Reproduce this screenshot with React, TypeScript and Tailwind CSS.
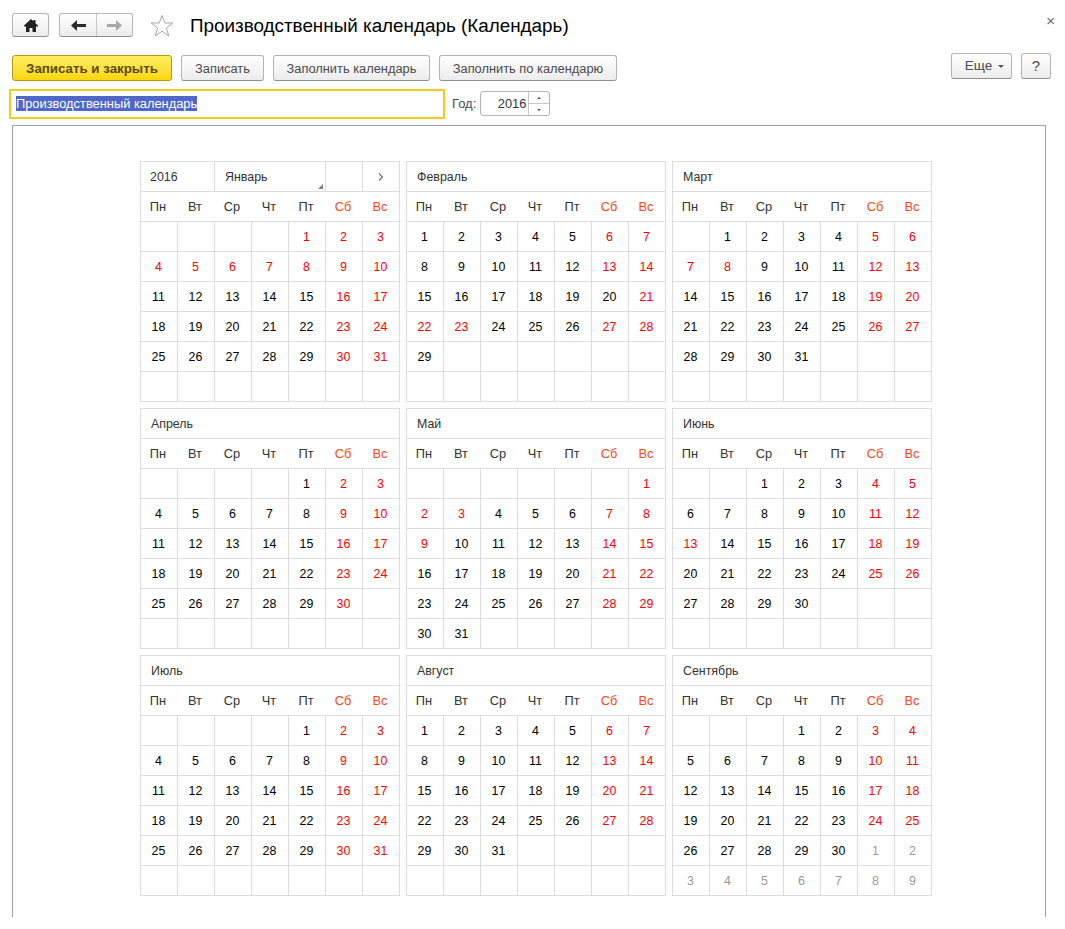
const dayNames = ["Пн", "Вт", "Ср", "Чт", "Пт", "Сб", "Вс"];

type Month = { name: string; offset: number; days: number; red: number[]; trailing?: number };

const months: Month[] = [
  { name: "Январь", offset: 4, days: 31, red: [1, 2, 3, 4, 5, 6, 7, 8, 9, 10, 16, 17, 23, 24, 30, 31] },
  { name: "Февраль", offset: 0, days: 29, red: [6, 7, 13, 14, 21, 22, 23, 27, 28] },
  { name: "Март", offset: 1, days: 31, red: [5, 6, 7, 8, 12, 13, 19, 20, 26, 27] },
  { name: "Апрель", offset: 4, days: 30, red: [2, 3, 9, 10, 16, 17, 23, 24, 30] },
  { name: "Май", offset: 6, days: 31, red: [1, 2, 3, 7, 8, 9, 14, 15, 21, 22, 28, 29] },
  { name: "Июнь", offset: 2, days: 30, red: [4, 5, 11, 12, 13, 18, 19, 25, 26] },
  { name: "Июль", offset: 4, days: 31, red: [2, 3, 9, 10, 16, 17, 23, 24, 30, 31] },
  { name: "Август", offset: 0, days: 31, red: [6, 7, 13, 14, 20, 21, 27, 28] },
  { name: "Сентябрь", offset: 3, days: 30, red: [3, 4, 10, 11, 17, 18, 24, 25], trailing: 9 },
];

function Button({ className, children }: { className: string; children: React.ReactNode }) {
  return (
    <button className={`flex items-center justify-center rounded-[3px] border border-[#b5b5b5] border-b-[#8f8f8f] bg-gradient-to-b from-white to-[#ececec] text-[#4b4b4b] ${className}`}>
      {children}
    </button>
  );
}

function Calendar({ month, first }: { month: Month; first: boolean }) {
  const cells: { label: number | null; color: string }[] = [];
  for (let i = 0; i < month.offset; i++) cells.push({ label: null, color: "" });
  for (let d = 1; d <= month.days; d++) {
    cells.push({ label: d, color: month.red.includes(d) ? "text-[#ff0000]" : "text-black" });
  }
  for (let d = 1; d <= (month.trailing ?? 0); d++) cells.push({ label: d, color: "text-[#9a9a9a]" });
  while (cells.length < 42) cells.push({ label: null, color: "" });

  return (
    <div className="w-[260px] border-t border-l border-[#dddddd] text-[12.4px]">
      {first ? (
        <div className="grid h-[30px] grid-cols-[74px_111px_37px_37px] text-[#333333]">
          <div className="flex items-center border-r border-b border-[#dddddd] pt-[1px] pl-[9px]">2016</div>
          <div className="relative flex items-center border-r border-b border-[#dddddd] pt-[1px] pl-[10px]">
            {month.name}
            <span className="absolute right-[2px] bottom-[2px] h-0 w-0 border-b-[5px] border-l-[5px] border-b-[#808080] border-l-transparent" />
          </div>
          <div className="border-r border-b border-[#dddddd]" />
          <div className="flex items-center justify-center border-r border-b border-[#dddddd]">
            <svg width="6" height="8" viewBox="0 0 6 8" fill="none" stroke="#777777" strokeWidth="1.2">
              <path d="M1 0.5L4.5 4L1 7.5" />
            </svg>
          </div>
        </div>
      ) : (
        <div className="flex h-[30px] items-center border-r border-b border-[#dddddd] pt-[1px] pl-[10px] text-[#333333]">{month.name}</div>
      )}
      <div className="grid h-[30px] grid-cols-[repeat(7,37px)] border-b border-[#dddddd] text-[12.8px]">
        {dayNames.map((d, i) => (
          <div key={d} className={`flex items-center justify-center border-r pr-[2px] ${i === 6 ? "border-[#dddddd]" : "border-transparent"} ${i > 4 ? "text-[#ff4a12]" : "text-[#333333]"}`}>
            {d}
          </div>
        ))}
      </div>
      <div className="grid grid-cols-[repeat(7,37px)]">
        {cells.map((c, i) => (
          <div key={i} className={`flex h-[30px] items-center justify-center border-r border-b border-[#dddddd] pt-[1px] pr-[1px] ${c.color}`}>
            {c.label}
          </div>
        ))}
      </div>
    </div>
  );
}

export default function App() {
  return (
    <div className="h-[929px] w-[1065px] overflow-hidden bg-white font-['Liberation_Sans',Arial,sans-serif]">
      <div className="relative flex h-[55px] items-start pt-[13px] pl-[12px]">
        <Button className="h-[24px] w-[37px]">
          <svg width="14" height="13" viewBox="0 0 14 13" fill="#222222">
            <path d="M7 0L0 6.5V7.5H2V13H5.5V9H8.5V13H12V7.5H14V6.5L11.5 4.2V1H9.5V2.3Z" />
          </svg>
        </Button>
        <div className="ml-[10px] flex h-[24px] w-[74px] rounded-[3px] border border-[#b5b5b5] border-b-[#8f8f8f] bg-gradient-to-b from-white to-[#ececec]">
          <div className="flex w-[37px] items-center justify-center border-r border-[#c8c8c8]">
            <svg width="15" height="11" viewBox="0 0 15 11" fill="#2b2b2b">
              <path d="M6 0L0 5.5L6 11V7H15V4H6Z" />
            </svg>
          </div>
          <div className="flex flex-1 items-center justify-center">
            <svg width="15" height="11" viewBox="0 0 15 11" fill="#a8a8a8">
              <path d="M9 0L15 5.5L9 11V7H0V4H9Z" />
            </svg>
          </div>
        </div>
        <svg className="mt-[1px] ml-[17px]" width="24" height="24" viewBox="0 0 24 24" fill="none" stroke="#a6a6a6" strokeWidth="1">
          <path d="M12 1.5L14.8 9H22.8L16.4 14L18.8 22L12 17.2L5.2 22L7.6 14L1.2 9H9.2Z" />
        </svg>
        <div className="ml-[16px] text-[18.85px] leading-[26px] text-black">Производственный календарь (Календарь)</div>
        <div className="absolute top-[12px] right-[10px] text-[15px] leading-[18px] text-[#666666]">×</div>
      </div>

      <div className="flex h-[34px] items-start pr-[14px] pl-[12px]">
        <button className="h-[26px] w-[160px] rounded-[3px] border border-[#b09a1a] bg-gradient-to-b from-[#ffee5c] to-[#fbd700] pt-[1px] text-[13.3px] font-bold text-[#5a4a10]">
          Записать и закрыть
        </button>
        <Button className="ml-[9px] h-[26px] w-[83px] pt-[1px] text-[12.85px]">Записать</Button>
        <Button className="ml-[9px] h-[26px] w-[157px] pt-[1px] text-[12.85px]">Заполнить календарь</Button>
        <Button className="ml-[9px] h-[26px] w-[178px] pt-[1px] text-[12.85px]">Заполнить по календарю</Button>
        <Button className="-mt-[2px] ml-auto h-[26px] w-[61px] gap-[6px] pl-[6px] text-[13.5px]">
          Еще
          <span className="h-0 w-0 border-x-[3px] border-t-[3px] border-x-transparent border-t-[#555555]" />
        </Button>
        <Button className="-mt-[2px] ml-[9px] h-[26px] w-[30px] text-[15px]">?</Button>
      </div>

      <div className="flex h-[36px] items-start pl-[9px]">
        <div className="flex h-[30px] w-[436px] items-center border-2 border-[#fcc81e] pb-[1px] pl-[5px] text-[12.85px]">
          <span className="bg-[#4f67c8] leading-[15px] text-white">Производственный календарь</span>
        </div>
        <div className="ml-[7px] flex h-[30px] items-center text-[13px] text-[#4b4b4b]">Год:</div>
        <div className="mt-[2px] ml-[4px] flex h-[25px] w-[70px] rounded-[3px] border border-[#b5b5b5] text-[12.85px] text-[#333333]">
          <div className="flex flex-1 items-center justify-end pr-[2px]">2016</div>
          <div className="flex w-[21px] flex-col border-l border-[#c8c8c8]">
            <div className="flex flex-1 items-center justify-center border-b border-[#c8c8c8]">
              <span className="h-0 w-0 border-x-[2px] border-b-[2px] border-x-transparent border-b-[#555555]" />
            </div>
            <div className="flex flex-1 items-center justify-center">
              <span className="h-0 w-0 border-x-[2px] border-t-[2px] border-x-transparent border-t-[#555555]" />
            </div>
          </div>
        </div>
      </div>

      <div className="ml-[12px] h-[792px] w-[1034px] border-t border-r border-l border-[#a0a0a0] pt-[35px] pl-[127px]">
        <div className="grid w-[792px] grid-cols-[repeat(3,260px)] gap-[6px]">
          {months.map((m, i) => (
            <Calendar key={m.name} month={m} first={i === 0} />
          ))}
        </div>
      </div>
    </div>
  );
}
